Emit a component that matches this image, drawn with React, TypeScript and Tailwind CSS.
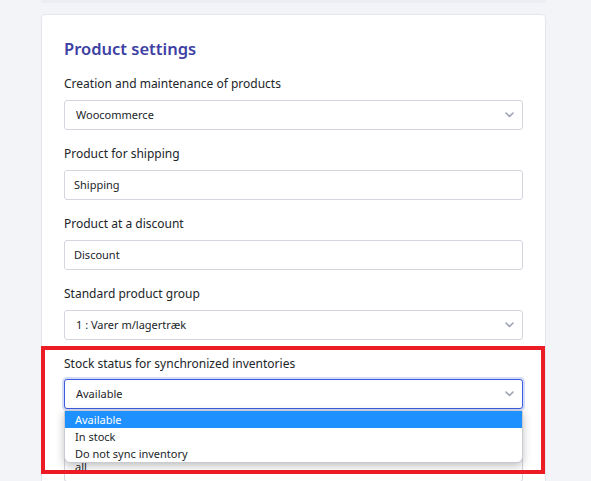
import React from 'react'

const font = { fontFamily: '"Noto Sans", "Open Sans", Arial, sans-serif' }

function Chevron() {
  return (
    <svg width="9" height="6" viewBox="0 0 9 6" className="absolute right-[8px] top-1/2 -translate-y-1/2">
      <path d="M1 1l3.5 3.5L8 1" fill="none" stroke="#9ba3b4" strokeWidth="1.6" strokeLinecap="round" strokeLinejoin="round" />
    </svg>
  )
}

function Field({ label, value, select }: { label: string; value: string; select?: boolean }) {
  return (
    <div className="mb-[14px]">
      <div className="h-[20px] leading-[20px] text-[12px] text-[#212529] mb-[6px]">{label}</div>
      <div className="relative h-[30px] rounded-[3px] border border-[#d4d6de] bg-white flex items-center text-[11px] text-[#212529]">
        <span className={select ? 'pl-[11px]' : 'pl-[9px]'}>{value}</span>
        {select && <Chevron />}
      </div>
    </div>
  )
}

export default function App() {
  return (
    <div className="relative min-h-[481px] bg-[#f3f4f8] overflow-hidden" style={font}>
      <div className="h-[3px] ml-[41px] w-[505px] bg-[#eceef3]" />
      <div className="ml-[41px] mt-[11px] w-[505px] bg-white border border-[#e4e6ec] rounded-[4px] px-[22px] pt-[19px] pb-10">
        <h2 className="h-[30px] leading-[30px] text-[16.5px] font-semibold text-[#3d41a3] mb-[10px]">Product settings</h2>
        <Field label="Creation and maintenance of products" value="Woocommerce" select />
        <Field label="Product for shipping" value="Shipping" />
        <Field label="Product at a discount" value="Discount" />
        <Field label="Standard product group" value="1 : Varer m/lagertræk" select />

        <div className="h-[20px] leading-[20px] text-[12px] text-[#212529] mb-[5px]">Stock status for synchronized inventories</div>
        <div className="relative">
          <div className="relative h-[30px] rounded-[3px] border border-[#3d5be0] shadow-[0_0_0_2px_#d3dbf7] bg-white flex items-center text-[11px] text-[#212529]">
            <span className="pl-[11px]">Available</span>
            <Chevron />
          </div>
          <div className="mt-[43px] h-[30px] rounded-[3px] border border-[#d4d6de] bg-white flex items-center text-[11px] text-[#212529]">
            <span className="pl-[10px]">all</span>
          </div>
          {/* open dropdown list */}
          <div className="absolute left-0 right-0 top-[31px] z-10 bg-white rounded-b-[6px] rounded-t-[2px] border border-[#c9cbd2] shadow-[0_3px_8px_rgba(0,0,0,0.25)] text-[11px] leading-[17px] text-[#212529]">
            <div className="bg-[#1e90ff] text-white pl-[10px] h-[17px]">Available</div>
            <div className="pl-[10px] h-[17px]">In stock</div>
            <div className="pl-[10px] h-[17px]">Do not sync inventory</div>
          </div>
        </div>
      </div>
      {/* red annotation frame */}
      <div className="absolute left-[41px] top-[346px] w-[504px] h-[128px] border-4 border-[#ec1c24] z-20 pointer-events-none" />
    </div>
  )
}
